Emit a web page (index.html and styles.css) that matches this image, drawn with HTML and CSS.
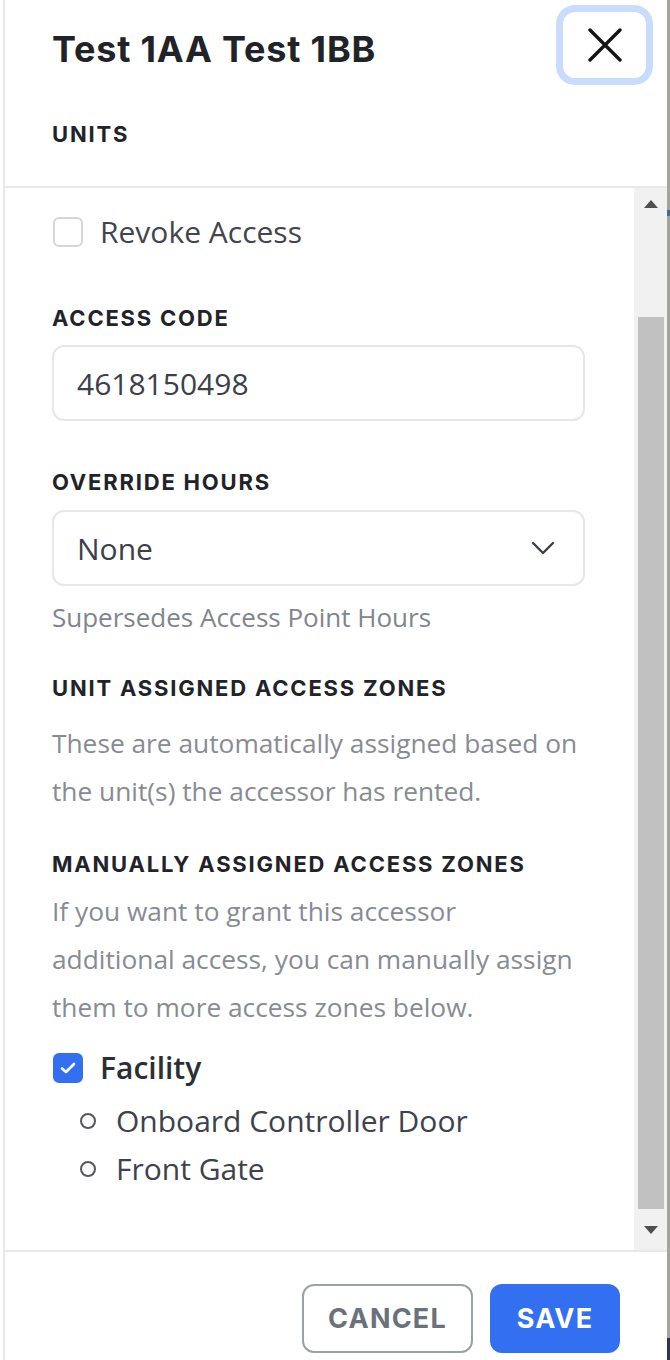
FILE: index.html
```html
<!DOCTYPE html>
<html lang="en">
<head>
<meta charset="utf-8">
<title>Test 1AA Test 1BB</title>
<link rel="stylesheet" href="styles.css">
</head>
<body>
<div class="app">
  <div class="panel">
    <header class="header">
      <div class="head-text">
        <h1 class="title">Test 1AA Test 1BB</h1>
        <div class="subtitle">UNITS</div>
      </div>
      <button class="close" aria-label="Close">
        <svg width="34" height="34" viewBox="0 0 34 34"><path d="M2 2 L32 32 M32 2 L2 32" stroke="#141414" stroke-width="3.4" stroke-linecap="round" fill="none"/></svg>
      </button>
    </header>
    <div class="body">
      <div class="content">
        <label class="check-row">
          <span class="checkbox"></span>
          <span class="check-label">Revoke Access</span>
        </label>

        <div class="label label-first">ACCESS CODE</div>
        <div class="field">4618150498</div>

        <div class="label label-second">OVERRIDE HOURS</div>
        <div class="field select">
          <span>None</span>
          <svg width="24" height="14" viewBox="0 0 24 14"><polyline points="2,2 12,12 22,2" stroke="#3a3f48" stroke-width="2.4" fill="none" stroke-linecap="round" stroke-linejoin="round"/></svg>
        </div>
        <div class="help">Supersedes Access Point Hours</div>

        <div class="label label-unit">UNIT ASSIGNED ACCESS ZONES</div>
        <p class="para para-unit">These are automatically assigned based on the unit(s) the accessor has rented.</p>

        <div class="label label-manual">MANUALLY ASSIGNED ACCESS ZONES</div>
        <p class="para para-manual">If you want to grant this accessor additional access, you can manually assign them to more access zones below.</p>

        <label class="check-row facility">
          <span class="checkbox checked">
            <svg width="18" height="14" viewBox="0 0 18 14"><polyline points="3,7.5 7,11 15,3" stroke="#fff" stroke-width="2.6" fill="none" stroke-linecap="round" stroke-linejoin="round"/></svg>
          </span>
          <span class="check-label strong">Facility</span>
        </label>
        <ul class="zones">
          <li>Onboard Controller Door</li>
          <li>Front Gate</li>
        </ul>
      </div>
      <div class="scrollbar">
        <div class="sb-btn"><span class="tri up"></span></div>
        <div class="sb-track"><div class="sb-thumb"></div></div>
        <div class="sb-btn"><span class="tri down"></span></div>
      </div>
    </div>
    <footer class="footer">
      <button class="btn cancel">CANCEL</button>
      <button class="btn save">SAVE</button>
    </footer>
  </div>
  <div class="edge"></div>
</div>
</body>
</html>
```
FILE: styles.css
```css
* { box-sizing: border-box; }
html, body { margin: 0; padding: 0; }
body {
  width: 670px;
  height: 1360px;
  overflow: hidden;
  background: #fff;
  font-family: "Open Sans", "Noto Sans", sans-serif;
}
.app {
  display: flex;
  height: 1360px;
  padding-left: 3px;
}
.panel {
  width: 664px;
  height: 1360px;
  border-left: 2px solid #e6e8ec;
  background: #fff;
  display: flex;
  flex-direction: column;
}
.edge {
  flex: 1;
  background: linear-gradient(to bottom, #a3a49f 0, #a3a49f 210px, #3b6f95 210px, #3b6f95 216px, #a3a49f 216px, #a3a49f 1338px, #2a3550 1338px);
}

/* header */
.header {
  height: 188px;
  flex: none;
  border-bottom: 2px solid #e6e8ec;
  display: flex;
  justify-content: space-between;
  align-items: flex-start;
  padding: 0 21px 0 47px;
}
.title {
  margin: 27px 0 0;
  font-family: Inter, sans-serif;
  font-weight: 700;
  font-size: 36px;
  line-height: 44px;
  letter-spacing: 0.8px;
  color: #212329;
}
.subtitle {
  margin-top: 48px;
  font-family: Inter, sans-serif;
  font-weight: 700;
  font-size: 22px;
  line-height: 30px;
  letter-spacing: 1.8px;
  color: #212329;
}
.close {
  margin-top: 12px;
  width: 83px;
  height: 66px;
  border: 0;
  padding: 0;
  background: #fff;
  border-radius: 12px;
  box-shadow: 0 0 0 7px #c9dcfd;
  display: flex;
  align-items: center;
  justify-content: center;
}

/* body */
.body {
  height: 1064px;
  flex: none;
  display: flex;
  border-bottom: 2px solid #e6e8ec;
}
.content {
  flex: 1;
  padding: 24px 49px 0 47px;
  overflow: hidden;
}
.check-row {
  display: flex;
  align-items: center;
  gap: 17px;
  height: 40px;
}
.checkbox {
  width: 30px;
  height: 30px;
  margin-left: 1px;
  border: 2px solid #d3d6dc;
  border-radius: 6px;
  display: flex;
  align-items: center;
  justify-content: center;
  flex: none;
}
.checkbox.checked {
  background: #3370f1;
  border-color: #3370f1;
}
.check-label {
  font-size: 30px;
  line-height: 40px;
  color: #40454e;
}
.check-label.strong {
  font-weight: 600;
  color: #2a2e37;
}
.label {
  font-family: Inter, sans-serif;
  font-weight: 700;
  font-size: 22px;
  line-height: 30px;
  letter-spacing: 1.8px;
  color: #212329;
}
.label-first { margin-top: 51px; }
.label-second { margin-top: 46px; }
.label-unit { margin-top: 38px; }
.label-manual { margin-top: 34px; }
.field {
  margin-top: 12px;
  height: 76px;
  border: 2px solid #e5e7eb;
  border-radius: 12px;
  display: flex;
  align-items: center;
  justify-content: space-between;
  padding: 0 28px 0 23px;
  font-size: 30px;
  color: #3b4049;
}
.field.select { margin-top: 13px; }
.help {
  margin-top: 13px;
  font-size: 26px;
  line-height: 36px;
  color: #80858e;
}
.para {
  margin: 0;
  max-width: 528px;
  font-size: 26.3px;
  line-height: 48px;
  color: #878b93;
}
.para-unit { margin-top: 16px; }
.para-manual { margin-top: 8px; }
.facility { margin-top: 17px; }
.zones {
  list-style: none;
  margin: 9px 0 0;
  padding: 0;
}
.zones li {
  display: flex;
  align-items: center;
  gap: 20px;
  padding-left: 28px;
  font-size: 30px;
  line-height: 48px;
  color: #3d424b;
}
.zones li::before {
  content: "";
  width: 12px;
  height: 12px;
  border: 2.4px solid #55585e;
  border-radius: 50%;
  flex: none;
}

/* scrollbar */
.scrollbar {
  width: 33px;
  flex: none;
  background: #f1f1f1;
  display: flex;
  flex-direction: column;
}
.sb-btn {
  height: 34px;
  display: flex;
  align-items: center;
  justify-content: center;
  flex: none;
}
.sb-track { flex: 1; }
.sb-thumb {
  margin: 95px 0 0 4px;
  width: 26px;
  height: 892px;
  background: #c1c1c1;
}
.tri {
  width: 0;
  height: 0;
  border-left: 7px solid transparent;
  border-right: 7px solid transparent;
}
.tri.up { border-bottom: 8px solid #505050; margin-top: -2px; }
.tri.down { border-top: 8px solid #505050; margin-top: -6px; }

/* footer */
.footer {
  flex: 1;
  display: flex;
  justify-content: flex-end;
  align-items: flex-start;
  gap: 17px;
  padding: 32px 47px 0 0;
}
.btn {
  height: 69px;
  border-radius: 12px;
  font-family: Inter, sans-serif;
  font-weight: 700;
  font-size: 27px;
  letter-spacing: 1.2px;
  padding: 0;
}
.cancel {
  width: 171px;
  background: #fff;
  border: 2px solid #9ca1a9;
  color: #6b717b;
}
.save {
  width: 130px;
  background: #3370f1;
  border: 0;
  color: #fff;
}
```
